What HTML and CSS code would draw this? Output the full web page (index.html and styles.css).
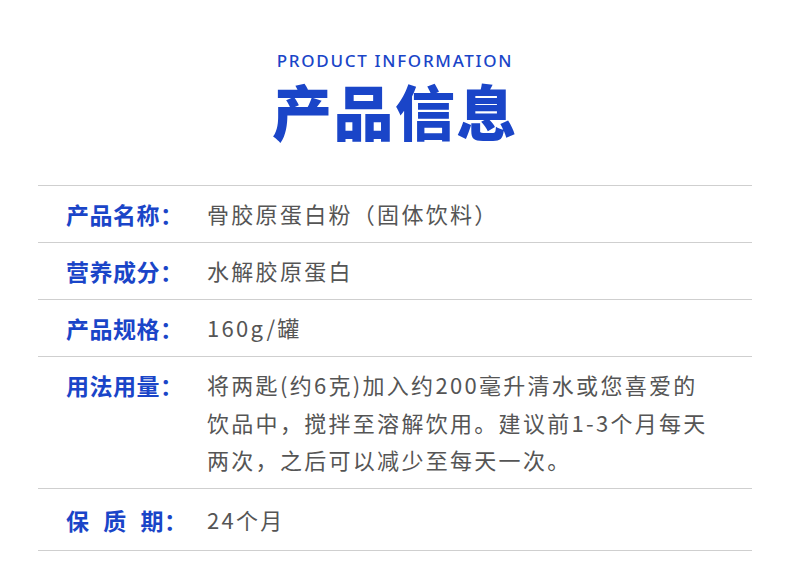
FILE: index.html
```html
<!DOCTYPE html>
<html lang="zh-CN">
<head>
<meta charset="utf-8">
<link rel="stylesheet" href="styles.css">
</head>
<body>
<div class="page">
  <header class="head">
    <div class="en">PRODUCT INFORMATION</div>
    <h1 class="cn">产品信息</h1>
  </header>
  <div class="table">
    <div class="row">
      <div class="label">产品名称：</div>
      <div class="value">骨胶原蛋白粉（固体饮料）</div>
    </div>
    <div class="row">
      <div class="label">营养成分：</div>
      <div class="value">水解胶原蛋白</div>
    </div>
    <div class="row">
      <div class="label">产品规格：</div>
      <div class="value">160g/罐</div>
    </div>
    <div class="row">
      <div class="label">用法用量：</div>
      <div class="value">将两匙(约6克)加入约200毫升清水或您喜爱的<br>饮品中，搅拌至溶解饮用。建议前1-3个月每天<br>两次，之后可以减少至每天一次。</div>
    </div>
    <div class="row row-last">
      <div class="label label-spaced">保 质 期：</div>
      <div class="value">24个月</div>
    </div>
  </div>
</div>
</body>
</html>
```

FILE: styles.css
```css
html, body {
  margin: 0;
  padding: 0;
  background: #ffffff;
}
.page {
  width: 790px;
  height: 577px;
  font-family: "Noto Sans CJK SC", "Noto Sans", sans-serif;
}
.head {
  display: flex;
  flex-direction: column;
  align-items: center;
  padding-top: 51px;
}
.en {
  font-family: "Noto Sans", "Open Sans", sans-serif;
  font-size: 17px;
  font-weight: 500;
  letter-spacing: 1.7px;
  color: #1a45c8;
  line-height: 20px;
}
.cn {
  margin: 0;
  margin-top: 2px;
  font-size: 60px;
  font-weight: 900;
  line-height: 74px;
  color: #1a45c8;
  letter-spacing: 1.5px;
}
.table {
  margin: 38px 38px 0 38px;
  border-top: 1px solid #cfcfcf;
}
.row {
  display: flex;
  align-items: flex-start;
  padding: 9px 0;
  border-bottom: 1px solid #cfcfcf;
}
.row-last {
  padding: 12px 0 11px;
}
.label {
  width: 141px;
  padding-left: 28px;
  flex: none;
  font-size: 23px;
  font-weight: 700;
  line-height: 38px;
  letter-spacing: 0.5px;
  color: #1a45c8;
}
.label-spaced {
  word-spacing: 8px;
}
.value {
  font-size: 22px;
  line-height: 37.5px;
  letter-spacing: 2.3px;
  color: #555555;
}
```
